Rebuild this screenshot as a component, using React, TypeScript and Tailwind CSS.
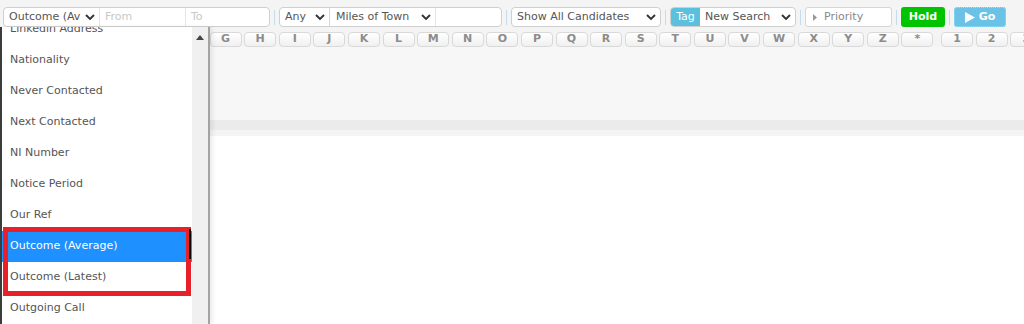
import React from "react";

const FONT = "font-['DejaVu_Sans',Verdana,sans-serif]";

function Chevron() {
  return (
    <svg width="10" height="7" viewBox="0 0 10 7" className="shrink-0">
      <polyline points="1,1 5,5 9,1" fill="none" stroke="#333" strokeWidth="1.9" />
    </svg>
  );
}

function Sep() {
  return <div className="w-px h-[15px] bg-[#c4dcec] mx-[4px] shrink-0" />;
}

const letters = [
  "A", "B", "C", "D", "E", "F", "G", "H", "I", "J", "K", "L", "M", "N", "O", "P", "Q", "R", "S", "T", "U", "V", "W", "X", "Y", "Z", "*",
];

const options = [
  "Linkedin Address",
  "Nationality",
  "Never Contacted",
  "Next Contacted",
  "NI Number",
  "Notice Period",
  "Our Ref",
  "Outcome (Average)",
  "Outcome (Latest)",
  "Outgoing Call",
];

function LetterBtn({ label }: { label: string }) {
  return (
    <div className="flex items-center justify-center w-[32px] h-[15px] mr-[2.6px] shrink-0 bg-gradient-to-b from-white to-[#f0f0f0] border border-[#d9d9d9] rounded-[4px] text-[11px] font-bold text-[#8c8c8c]">
      {label}
    </div>
  );
}

export default function App() {
  return (
    <div className={`relative w-[1024px] h-[324px] overflow-hidden bg-white text-[11px] ${FONT}`}>
      {/* Toolbar */}
      <div className="bg-[#f4f4f4] pt-[7px]">
        <div className="flex items-center h-[20px] pl-[3px]">
          {/* group 1 */}
          <div className="flex h-full w-[267px] bg-white border border-[#cfcfcf] rounded-[4px] overflow-hidden">
            <div className="flex items-center justify-between w-[96px] pl-[5px] pr-[4px] text-[#555] border-r border-[#e6e6e6]">
              <span>Outcome (Av</span>
              <Chevron />
            </div>
            <div className="flex items-center w-[86px] pl-[5px] text-[#c8c8c8] border-r border-[#e6e6e6]">From</div>
            <div className="flex items-center flex-1 pl-[5px] text-[#c8c8c8]">To</div>
          </div>
          <Sep />
          {/* group 2 */}
          <div className="flex h-full w-[223px] bg-white border border-[#cfcfcf] rounded-[4px] overflow-hidden">
            <div className="flex items-center justify-between w-[50px] pl-[5px] pr-[4px] text-[#555] border-r border-[#d6d6d6]">
              <span>Any</span>
              <Chevron />
            </div>
            <div className="flex items-center justify-between w-[106px] pl-[6px] pr-[4px] text-[#555] border-r border-[#e6e6e6]">
              <span>Miles of Town</span>
              <Chevron />
            </div>
            <div className="flex-1" />
          </div>
          <Sep />
          {/* group 3 */}
          <div className="flex items-center justify-between h-full w-[150px] pl-[5px] pr-[4px] bg-white border border-[#cfcfcf] rounded-[4px] text-[#555]">
            <span>Show All Candidates</span>
            <Chevron />
          </div>
          <Sep />
          {/* group 4 */}
          <div className="flex h-full w-[126px] bg-white border border-[#cfcfcf] rounded-[4px] overflow-hidden">
            <div className="flex items-center justify-center w-[29px] bg-[#5bc0de] text-white">Tag</div>
            <div className="flex items-center justify-between flex-1 pl-[5px] pr-[4px] text-[#555]">
              <span>New Search</span>
              <Chevron />
            </div>
          </div>
          <Sep />
          <div className="flex items-center h-full w-[87px] pl-[7px] bg-white border border-[#d6d6d6] rounded-[3px] text-[#888]">
            <svg width="4" height="7" viewBox="0 0 4 7" className="mr-[7px]">
              <polygon points="0,0 4,3.5 0,7" fill="#999" />
            </svg>
            <span>Priority</span>
          </div>
          <Sep />
          <div className="flex items-center justify-center h-full w-[44px] bg-[#00c400] rounded-[3px] text-white font-bold">Hold</div>
          <Sep />
          <div className="flex items-center justify-center gap-[4px] h-full w-[52px] bg-[#6ac3e6] border border-dotted border-[#a9dbef] rounded-[3px] text-white font-bold">
            <svg width="10" height="11" viewBox="0 0 10 11">
              <polygon points="0,0 10,5.5 0,11" fill="#fff" />
            </svg>
            <span>Go</span>
          </div>
        </div>

        {/* Letter row */}
        <div className="flex items-center h-[15px] mt-[5px] pl-[2px]">
          {letters.map((l) => (
            <LetterBtn key={l} label={l} />
          ))}
          <div className="w-[5px] shrink-0" />
          {["1", "2", "3"].map((l) => (
            <LetterBtn key={l} label={l} />
          ))}
        </div>
      </div>

      {/* Body */}
      <div className="h-[73px] bg-[#f7f7f7]" />
      <div className="h-[10px] bg-[#ebebeb]" />
      <div className="h-[6px] bg-[#f4f4f4]" />

      {/* Open dropdown list */}
      <div className="absolute left-0 top-[27px] bottom-0 w-[210px] flex bg-white border-l-2 border-[#3c3c3c] border-r-2 border-r-[#a3a3a3] shadow-[3px_0_4px_rgba(0,0,0,0.07)] overflow-hidden">
        <div className="flex-1 -mt-[13.5px]">
          {options.map((o) => (
            <div
              key={o}
              className={`flex items-center h-[31px] pl-[8px] ${
                o === "Outcome (Average)" ? "bg-[#1e90ff] text-white" : "text-[#555]"
              }`}
            >
              {o}
            </div>
          ))}
        </div>
        <div className="w-[16px] bg-[#f0f0f0] flex justify-center pt-[8px]">
          <svg width="8" height="5" viewBox="0 0 8 5">
            <polygon points="0,5 4,0 8,5" fill="#444" />
          </svg>
        </div>
      </div>

      {/* Annotation */}
      <div className="absolute left-[3px] top-[227px] w-[188px] h-[69px] border-[5px] border-[#e8202a]" />
      <div className="absolute left-[189px] top-[229px] w-[2px] h-[30px] bg-black" />
    </div>
  );
}
